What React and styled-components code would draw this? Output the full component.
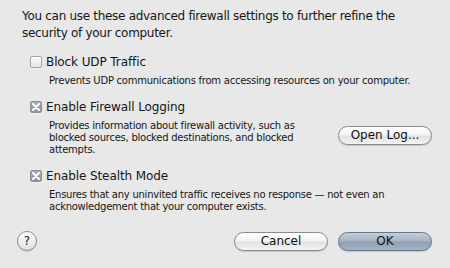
import React from "react";
import styled, { createGlobalStyle } from "styled-components";

const Global = createGlobalStyle`
  html, body { margin: 0; padding: 0; background: #e8e8e8; }
  body { font-family: "DejaVu Sans", "Liberation Sans", sans-serif; color: #161616; }
`;

const Dialog = styled.div`
  width: 450px;
  height: 268px;
  box-sizing: border-box;
  padding: 8px 18px 0 22px;
  background: #e8e8e8;
  display: flex;
  flex-direction: column;
`;

const Intro = styled.p`
  margin: 0;
  font-size: 12px;
  line-height: 17px;
  letter-spacing: -0.3px;
`;

const Options = styled.div`
  display: flex;
  flex-direction: column;
  gap: 11px;
  margin-top: 11px;
  padding-left: 8px;
`;

const Option = styled.div`
  display: flex;
  flex-direction: column;
`;

const CheckRow = styled.label`
  display: flex;
  align-items: center;
  gap: 4px;
  height: 17px;
  font-size: 12px;
  letter-spacing: -0.1px;
`;

const Box = styled.span`
  width: 12px;
  height: 12px;
  box-sizing: border-box;
  border-radius: 2px;
  display: inline-flex;
  align-items: center;
  justify-content: center;
  border: 1px solid ${(p) => (p.$checked ? "#85919d" : "#a3a3a3")};
  background: ${(p) =>
    p.$checked
      ? "linear-gradient(#a3aeb9, #8a97a4)"
      : "linear-gradient(#fdfdfd, #e4e4e4)"};
  box-shadow: 0 1px 0 rgba(255,255,255,0.6);
`;

const DescRow = styled.div`
  display: flex;
  align-items: center;
  justify-content: space-between;
  margin-top: 5px;
  padding-left: 19px;
`;

const Desc = styled.p`
  margin: 0;
  font-size: 10px;
  line-height: 12px;
  letter-spacing: -0.25px;
`;

const PillButton = styled.button`
  width: 94px;
  height: 19px;
  box-sizing: border-box;
  border-radius: 10px;
  font-family: "DejaVu Sans", "Liberation Sans", sans-serif;
  font-size: 12px;
  color: #111;
  padding: 0;
  border: 1px solid ${(p) => (p.$default ? "#65788a" : "#8a8a8a")};
  background: ${(p) =>
    p.$default
      ? "linear-gradient(#c3ced8 0%, #a6b5c3 45%, #8fa2b3 55%, #a3b4c3 100%)"
      : "linear-gradient(#ffffff 0%, #f3f3f3 45%, #e2e2e2 55%, #f4f4f4 100%)"};
  box-shadow: 0 1px 1px rgba(0,0,0,0.15);
`;

const SideButton = styled(PillButton)`
  margin-top: -6px;
`;

const Footer = styled.div`
  display: flex;
  align-items: center;
  margin-top: 18px;
  margin-left: -5px;
  gap: 10px;
`;

const Help = styled.button`
  width: 20px;
  height: 20px;
  border-radius: 50%;
  box-sizing: border-box;
  border: 1px solid #8c8c8c;
  background: linear-gradient(#ffffff, #e0e0e0);
  font-family: "DejaVu Sans", sans-serif;
  font-size: 12px;
  color: #222;
  padding: 0;
  margin-right: auto;
  box-shadow: 0 1px 1px rgba(0,0,0,0.12);
`;

const Check = () => (
  <svg width="8" height="8" viewBox="0 0 8 8">
    <path d="M1 1 L7 7 M7 1 L1 7" stroke="#fff" strokeWidth="2" strokeLinecap="round" />
  </svg>
);

function CheckOption({ checked, label }) {
  return (
    <CheckRow>
      <Box $checked={checked}>{checked && <Check />}</Box>
      {label}
    </CheckRow>
  );
}

export default function App() {
  return (
    <>
      <Global />
      <Dialog>
        <Intro>
          You can use these advanced firewall settings to further refine the
          <br />
          security of your computer.
        </Intro>
        <Options>
          <Option>
            <CheckOption label="Block UDP Traffic" />
            <DescRow>
              <Desc>Prevents UDP communications from accessing resources on your computer.</Desc>
            </DescRow>
          </Option>
          <Option>
            <CheckOption checked label="Enable Firewall Logging" />
            <DescRow>
              <Desc>
                Provides information about firewall activity, such as
                <br />
                blocked sources, blocked destinations, and blocked
                <br />
                attempts.
              </Desc>
              <SideButton>Open Log...</SideButton>
            </DescRow>
          </Option>
          <Option>
            <CheckOption checked label="Enable Stealth Mode" />
            <DescRow>
              <Desc>
                Ensures that any uninvited traffic receives no response — not even an
                <br />
                acknowledgement that your computer exists.
              </Desc>
            </DescRow>
          </Option>
        </Options>
        <Footer>
          <Help>?</Help>
          <PillButton>Cancel</PillButton>
          <PillButton $default>OK</PillButton>
        </Footer>
      </Dialog>
    </>
  );
}
